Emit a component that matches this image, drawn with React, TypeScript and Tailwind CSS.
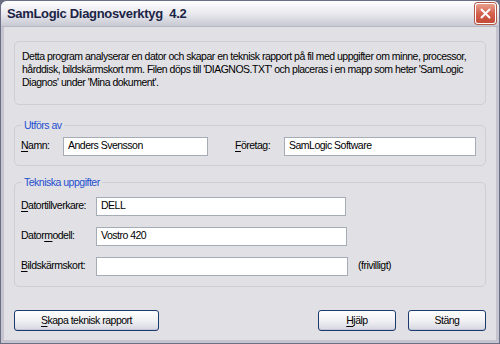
import React from 'react';

const font = { fontFamily: '"Liberation Sans", Arial, sans-serif' };

function U({ children }: { children: React.ReactNode }) {
  return <span className="underline underline-offset-2">{children}</span>;
}

function Field({ value, className }: { value: string; className: string }) {
  return (
    <div className={`h-[19px] shrink-0 bg-white border border-[#a5acb5] px-[4px] flex items-center text-black ${className}`}>
      {value}
    </div>
  );
}

function Button({ children, className }: { children: React.ReactNode; className: string }) {
  return (
    <button className={`h-[21px] rounded-[3px] border border-[#1c3a6e] bg-gradient-to-b from-white via-[#f1f1f4] to-[#d6d7e0] text-black flex items-center justify-center shadow-[inset_0_-1px_0_#c2c6d6] ${className}`}>
      {children}
    </button>
  );
}

export default function App() {
  return (
    <div style={font} className="w-[500px] h-[344px] bg-[#6b6f86] p-[1px] overflow-hidden">
      <div className="w-full h-full flex flex-col bg-[#e1e0e5] rounded-t-[6px] overflow-hidden">
        {/* Titelrad */}
        <div className="h-[26px] shrink-0 flex items-center justify-between pl-[6px] pr-[3px] bg-gradient-to-b from-[#ffffff] via-[#e9e9ef] to-[#c9c9d3] border-b border-[#b8b8c4]">
          <span className="text-[13px] font-bold text-[#1b2446] tracking-tight">SamLogic Diagnosverktyg&nbsp;&nbsp;4.2</span>
          <div className="w-[21px] h-[21px] rounded-[3px] border border-white bg-gradient-to-b from-[#e8a08e] via-[#d4614c] to-[#c34a36] flex items-center justify-center shadow-[0_0_0_1px_#b45a4a]">
            <svg width="11" height="11" viewBox="0 0 11 11">
              <path d="M1.5 1.5 L9.5 9.5 M9.5 1.5 L1.5 9.5" stroke="white" strokeWidth="2" strokeLinecap="round" />
            </svg>
          </div>
        </div>

        {/* Innehåll */}
        <div className="flex-1 flex flex-col border-x-[3px] border-b-[3px] border-[#c5c4cf] px-[10px] pt-[14px] pb-[9px] text-[10.5px] tracking-[-0.5px] text-black">
          <div className="h-[64px] rounded-[5px] border border-[#cfcdd6] px-[7px] pt-[8px] leading-[13px] whitespace-nowrap">
            Detta program analyserar en dator och skapar en teknisk rapport på fil med uppgifter om minne, processor,
            <br />
            hårddisk, bildskärmskort mm. Filen döps till 'DIAGNOS.TXT' och placeras i en mapp som heter 'SamLogic
            <br />
            Diagnos' under 'Mina dokument'.
          </div>

          <fieldset className="mt-[13px] rounded-[5px] border border-[#cfcdd6] px-[6px] pt-[3px] pb-[9px] flex items-center">
            <legend className="ml-[1px] px-[2px] text-[#1e4fcf]">Utförs av</legend>
            <span className="w-[42px] shrink-0"><U>N</U>amn:</span>
            <Field value="Anders Svensson" className="w-[145px]" />
            <span className="ml-[27px] w-[49px] shrink-0"><U>F</U>öretag:</span>
            <Field value="SamLogic Software" className="w-[192px]" />
          </fieldset>

          <fieldset className="mt-[9px] rounded-[5px] border border-[#cfcdd6] px-[6px] pt-[6px] pb-[10px] flex flex-col gap-[11px]">
            <legend className="ml-[1px] px-[2px] text-[#1e4fcf]">Tekniska uppgifter</legend>
            <div className="flex items-center">
              <span className="w-[75px] shrink-0"><U>D</U>atortillverkare:</span>
              <Field value="DELL" className="w-[250px]" />
            </div>
            <div className="flex items-center">
              <span className="w-[75px] shrink-0">Dator<U>m</U>odell:</span>
              <Field value="Vostro 420" className="w-[251px]" />
            </div>
            <div className="flex items-center">
              <span className="w-[75px] shrink-0"><U>B</U>ildskärmskort:</span>
              <Field value="" className="w-[252px]" />
              <span className="ml-[10px]">(frivilligt)</span>
            </div>
          </fieldset>

          <div className="mt-auto flex items-center">
            <Button className="w-[145px]"><span><U>S</U>kapa teknisk rapport</span></Button>
            <Button className="ml-auto w-[78px]"><span><U>H</U>jälp</span></Button>
            <Button className="ml-[12px] w-[78px]">Stäng</Button>
          </div>
        </div>
      </div>
    </div>
  );
}
